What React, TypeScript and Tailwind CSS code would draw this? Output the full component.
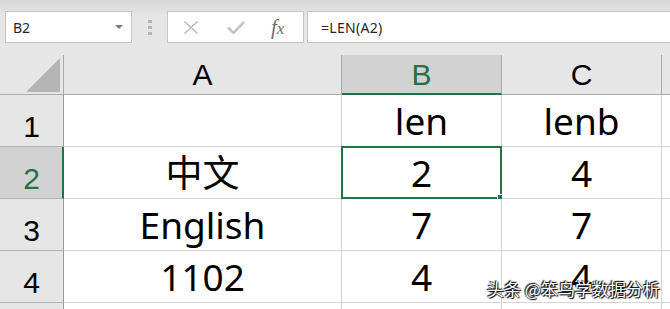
import React from 'react';

const cellFont = { fontFamily: "'Noto Sans', 'Noto Sans CJK SC', sans-serif" };
const headFont = { fontFamily: "'Liberation Sans', Arial, sans-serif" };

const cols = ['A', 'B', 'C'];
const rows: string[][] = [
  ['', 'len', 'lenb'],
  ['中文', '2', '4'],
  ['English', '7', '7'],
  ['1102', '4', '4'],
];

export default function App() {
  return (
    <div className="relative h-[309px] w-[670px] overflow-hidden bg-[#e6e6e6]" style={cellFont}>
      {/* formula bar */}
      <div className="flex h-[55px] items-start bg-gradient-to-b from-[#d8d8d8] via-[#e6e6e6] via-30% to-[#e6e6e6] pt-[11px]">
        <div className="ml-[5px] flex h-[32px] w-[127px] items-center justify-between border border-[#c6c6c6] bg-white pl-[7px] pr-[8px] text-[14px] text-[#262626]">
          <span>B2</span>
          <span className="h-0 w-0 border-x-[4px] border-t-[4px] border-x-transparent border-t-[#7a7a7a]" />
        </div>
        <div className="ml-[16px] flex h-[32px] flex-col items-center justify-center gap-[3px]">
          <span className="h-[3px] w-[4px] bg-[#b4b4b4]" />
          <span className="h-[3px] w-[4px] bg-[#b4b4b4]" />
          <span className="h-[3px] w-[4px] bg-[#b4b4b4]" />
        </div>
        <div className="ml-[15px] flex h-[32px] w-[137px] items-center border border-[#c6c6c6] bg-white">
          <svg className="ml-[15px]" width="16" height="13" viewBox="0 0 16 13">
            <path d="M1.5 0.5 L14.5 12.5 M14.5 0.5 L1.5 12.5" stroke="#bdbdbd" strokeWidth="1.6" fill="none" />
          </svg>
          <svg className="ml-[28px]" width="18" height="13" viewBox="0 0 18 13">
            <path d="M1 6.5 L6.5 12 L17 1" stroke="#c4c4c4" strokeWidth="2.6" fill="none" />
          </svg>
          <span
            className="ml-[26px] text-[21px] italic leading-none text-[#6f6f6f]"
            style={{ fontFamily: "'Liberation Serif', 'Times New Roman', serif" }}
          >
            f<span className="text-[17px]">x</span>
          </span>
        </div>
        <div className="ml-[3px] flex h-[32px] flex-1 items-center border-y border-l border-[#c6c6c6] bg-white pl-[13px] text-[14px] tracking-[0.3px] text-[#262626]">
          =LEN(A2)
        </div>
      </div>

      {/* sheet grid */}
      <div className="grid grid-cols-[64px_278px_160px_160px_8px] grid-rows-[40px_52px_52px_52px_52px_8px]">
        {/* corner */}
        <div className="flex items-end justify-end border-b border-r border-[#ababab] pb-[2px] pr-[3px]">
          <svg width="34" height="34" viewBox="0 0 34 34">
            <polygon points="34,0 34,34 0,34" fill="#b4b4b4" />
          </svg>
        </div>
        {cols.map((c) => {
          const sel = c === 'B';
          return (
            <div
              key={c}
              className={
                sel
                  ? 'flex items-end justify-center border-r border-b-2 border-r-[#ababab] border-b-[#217346] bg-[#d2d2d2] pb-[3px] text-[30px] leading-none text-[#217346]'
                  : 'flex items-end justify-center border-b border-r border-[#ababab] pb-[4px] text-[30px] leading-none text-black'
              }
              style={headFont}
            >
              {c}
            </div>
          );
        })}
        <div className="border-b border-[#ababab]" />

        {rows.map((r, i) => {
          const rowSel = i === 1;
          return (
            <React.Fragment key={i}>
              <div
                className={
                  rowSel
                    ? 'flex items-end justify-center border-b border-r-2 border-b-[#b4b4b4] border-r-[#217346] bg-[#d2d2d2] pb-[4px] pl-[1px] text-[30px] leading-none text-[#217346]'
                    : 'flex items-end justify-center border-b border-r border-[#b4b4b4] border-r-[#9b9b9b] pb-[4px] text-[30px] leading-none text-black'
                }
                style={headFont}
              >
                {i + 1}
              </div>
              {r.map((v, j) => (
                <div
                  key={j}
                  className="relative flex items-end justify-center border-b border-r border-[#d4d4d4] bg-white pb-[7px] text-[37px] leading-none text-black"
                >
                  {v}
                  {rowSel && j === 1 && (
                    <div className="absolute -left-[1px] -top-[1px] h-[53px] w-[161px] border-2 border-[#217346]">
                      <div className="absolute -bottom-[4px] -right-[4px] h-[6px] w-[6px] bg-[#217346] ring-1 ring-white" />
                    </div>
                  )}
                </div>
              ))}
              <div className="border-b border-[#d4d4d4] bg-white" />
            </React.Fragment>
          );
        })}
        <div className="border-r border-[#9b9b9b] bg-[#e6e6e6]" />
        <div className="border-r border-[#d4d4d4] bg-white" />
        <div className="border-r border-[#d4d4d4] bg-white" />
        <div className="border-r border-[#d4d4d4] bg-white" />
        <div className="bg-white" />
      </div>

      {/* watermark */}
      <div
        className="absolute left-[487px] top-[280px] text-[17px] leading-none text-white"
        style={{
          fontFamily: "'Noto Sans CJK SC', sans-serif",
          textShadow: '0 0 2px #000, 1px 1px 1px #000, -1px -1px 1px #000',
        }}
      >
        头条 @笨鸟学数据分析
      </div>
    </div>
  );
}
